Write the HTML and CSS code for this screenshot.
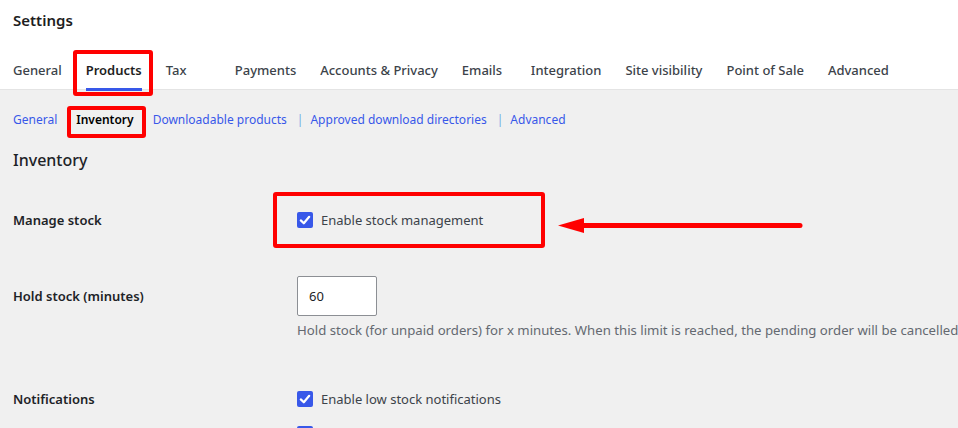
FILE: index.html
```html
<!DOCTYPE html>
<html lang="en">
<head>
    <meta charset="UTF-8">
    <title>Settings - Inventory</title>
    <link rel="stylesheet" href="styles.css">
</head>
<body>

<div class="top-bar"> <!-- white header with title and tabs -->
    <h1 class="page-title">Settings</h1>
    <ul class="tabs">
        <li><a href="#">General</a></li>
        <li class="active marked"><a href="#">Products</a></li>
        <li><a href="#">Tax</a></li>
        <li><a href="#">Payments</a></li>
        <li><a href="#">Accounts &amp; Privacy</a></li>
        <li><a href="#">Emails</a></li>
        <li><a href="#">Integration</a></li>
        <li><a href="#">Site visibility</a></li>
        <li><a href="#">Point of Sale</a></li>
        <li><a href="#">Advanced</a></li>
    </ul>
</div>

<div class="main-content">
    <ul class="subnav">
        <li><a href="#">General</a></li>
        <li class="current marked">Inventory</li>
        <li><a href="#">Downloadable products</a></li>
        <li class="sep">|</li>
        <li><a href="#">Approved download directories</a></li>
        <li class="sep">|</li>
        <li><a href="#">Advanced</a></li>
    </ul>

    <h2 class="section-title">Inventory</h2>

    <div class="form-row row-manage">
        <div class="label">Manage stock</div>
        <div class="field">
            <label class="check marked-box">
                <span class="box"><svg width="16" height="16" viewBox="0 0 16 16"><path d="M3.8 8.4 L6.8 11.3 L12.2 4.8" fill="none" stroke="#fff" stroke-width="2.2" stroke-linecap="round" stroke-linejoin="round"/></svg></span>
                Enable stock management
            </label>
            <svg class="arrow" width="250" height="20" viewBox="0 0 250 20">
                <line x1="24" y1="9.5" x2="242" y2="9.5" stroke="#ff0000" stroke-width="5" stroke-linecap="round"/>
                <polygon points="0,9.5 26,2 26,17" fill="#ff0000"/>
            </svg>
        </div>
    </div>

    <div class="form-row row-hold">
        <div class="label">Hold stock (minutes)</div>
        <div class="field">
            <input class="num-input" type="text" value="60">
            <p class="description">Hold stock (for unpaid orders) for x minutes. When this limit is reached, the pending order will be cancelled.</p>
        </div>
    </div>

    <div class="form-row row-notify">
        <div class="label">Notifications</div>
        <div class="field">
            <label class="check">
                <span class="box"><svg width="16" height="16" viewBox="0 0 16 16"><path d="M3.8 8.4 L6.8 11.3 L12.2 4.8" fill="none" stroke="#fff" stroke-width="2.2" stroke-linecap="round" stroke-linejoin="round"/></svg></span>
                Enable low stock notifications
            </label>
            <span class="box next-check"></span>
        </div>
    </div>
</div>

</body>
</html>
```

FILE: styles.css
```css
html, body {
    height: 100%;
    margin: 0;
    padding: 0;
    font-family: "Noto Sans", "Open Sans", sans-serif;
    color: #1d2327;
    background: #f0f0f0;
    overflow: hidden;
}

.top-bar {
    background: #fff;
    height: 90px;
    padding: 0 13px;
    box-sizing: border-box;
    border-bottom: 1px solid #e4e4e4;
}

.page-title {
    margin: 0;
    padding-top: 10px;
    font-size: 15px;
    line-height: 20px;
    font-weight: 600;
    color: #1e1e1e;
}

.tabs {
    list-style: none;
    margin: 0;
    padding: 0;
    margin-top: 28px;
    display: flex;
    gap: 24px;
}

.tabs li {
    position: relative;
    min-width: 45px;
    height: 31px;
}

.tabs li a {
    display: inline-block;
    font-size: 13px;
    line-height: 20px;
    font-weight: 500;
    color: #3c434a;
    text-decoration: none;
    height: 31px;
    box-sizing: border-box;
}

.tabs li.active a {
    color: #1e1e1e;
    font-weight: 600;
    border-bottom: 3px solid #3858e9;
}

/* red annotation frames */
.marked::after {
    content: "";
    position: absolute;
    border: 4px solid #ff0000;
    border-radius: 3px;
    box-sizing: border-box;
}

.tabs li.marked::after {
    left: -13px;
    right: -11px;
    top: -8px;
    bottom: -7px;
}

.main-content {
    position: relative;
    padding: 0 13px;
}

.subnav {
    list-style: none;
    margin: 0;
    padding: 20px 0 0;
    display: flex;
    font-size: 12px;
    line-height: 20px;
}

.subnav li {
    position: relative;
    margin-right: 19px;
}

.subnav li a {
    color: #3858e9;
    text-decoration: none;
}

.subnav li.sep {
    color: #72aee6;
    margin-right: 7px;
    margin-left: -9px;
}

.subnav li.current {
    font-weight: 600;
    color: #000;
}

.subnav li.marked::after {
    left: -9px;
    right: -12px;
    top: -4px;
    bottom: -8px;
}

.section-title {
    margin: 20px 0 0;
    font-size: 16px;
    line-height: 20px;
    font-weight: 500;
    color: #1d2327;
}

.form-row {
    display: grid;
    grid-template-columns: 284px 1fr;
}

.label {
    font-size: 13px;
    font-weight: 600;
    line-height: 20px;
    color: #1d2327;
}

.field {
    position: relative;
    font-size: 13px;
    line-height: 20px;
}

.row-manage {
    margin-top: 40px;
}

.row-hold {
    margin-top: 46px;
}

.row-hold .label {
    padding-top: 10px;
}

.row-notify {
    margin-top: 49px;
}

.check {
    display: flex;
    align-items: center;
    gap: 8px;
    color: #3c434a;
    white-space: nowrap;
}

.box {
    width: 16px;
    height: 16px;
    background: #3858e9;
    border-radius: 2px;
    display: block;
}

.box svg {
    display: block;
}

.marked-box {
    position: relative;
}

.marked-box::after {
    content: "";
    position: absolute;
    left: -24px;
    top: -18px;
    width: 272px;
    height: 56px;
    border: 4px solid #ff0000;
    border-radius: 3px;
    box-sizing: border-box;
}

.arrow {
    position: absolute;
    left: 261px;
    top: 6px;
}

.num-input {
    display: block;
    width: 80px;
    height: 40px;
    box-sizing: border-box;
    border: 1px solid #8c8f94;
    border-radius: 2px;
    background: #fff;
    font-family: inherit;
    font-size: 13px;
    color: #1d2327;
    padding: 0 11px;
}

.description {
    margin: 4px 0 0;
    font-size: 13.2px;
    line-height: 20px;
    color: #646970;
    white-space: nowrap;
}

.next-check {
    margin-top: 17px;
}
```
